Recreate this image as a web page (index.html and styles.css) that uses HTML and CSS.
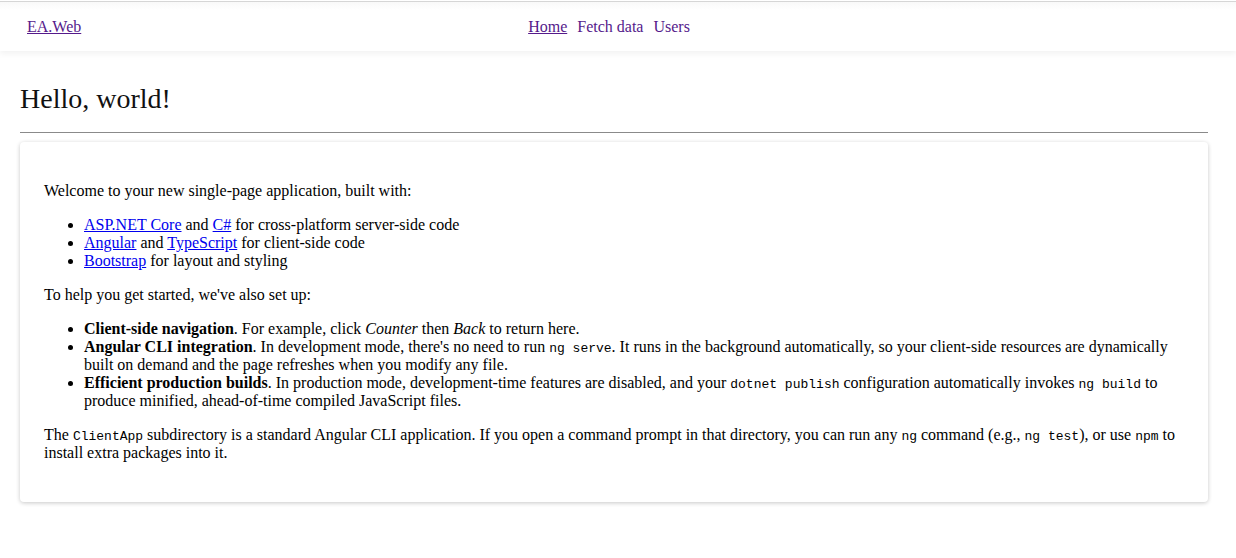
FILE: index.html
```html
<!DOCTYPE html>
<html>
<head>
<meta charset="utf-8">
<title>EA.Web</title>
<link rel="stylesheet" href="styles.css">
</head>
<body>
<header class="topbar">
  <a class="brand" href="#">EA.Web</a>
  <nav class="nav">
    <a class="nav-link active" href="#">Home</a>
    <a class="nav-link" href="#">Fetch data</a>
    <a class="nav-link" href="#">Users</a>
  </nav>
  <span></span>
</header>
<main class="main">
  <h1 class="title">Hello, world!</h1>
  <hr class="rule">
  <section class="card">
    <p>Welcome to your new single-page application, built with:</p>
    <ul>
      <li><a href="#">ASP.NET Core</a> and <a href="#">C#</a> for cross-platform server-side code</li>
      <li><a href="#">Angular</a> and <a href="#">TypeScript</a> for client-side code</li>
      <li><a href="#">Bootstrap</a> for layout and styling</li>
    </ul>
    <p>To help you get started, we've also set up:</p>
    <ul>
      <li><strong>Client-side navigation</strong>. For example, click <em>Counter</em> then <em>Back</em> to return here.</li>
      <li><strong>Angular CLI integration</strong>. In development mode, there's no need to run <code>ng serve</code>. It runs in the background automatically, so your client-side resources are dynamically built on demand and the page refreshes when you modify any file.</li>
      <li><strong>Efficient production builds</strong>. In production mode, development-time features are disabled, and your <code>dotnet publish</code> configuration automatically invokes <code>ng build</code> to produce minified, ahead-of-time compiled JavaScript files.</li>
    </ul>
    <p>The <code>ClientApp</code> subdirectory is a standard Angular CLI application. If you open a command prompt in that directory, you can run any <code>ng</code> command (e.g., <code>ng test</code>), or use <code>npm</code> to install extra packages into it.</p>
  </section>
</main>
</body>
</html>
```
FILE: styles.css
```css
html, body {
  margin: 0;
  padding: 0;
  background: #fff;
}
body {
  font-family: "Liberation Serif", "Times New Roman", serif;
  font-size: 16px;
  color: #000;
  border-top: 1px solid #fff;
}
.topbar {
  border-top: 1px solid #d6d6d6;
  height: 49px;
  display: grid;
  grid-template-columns: 1fr auto 1fr;
  align-items: center;
  padding: 0 45px 0 27px;
  background: linear-gradient(#f9f9f9 0, #fff 8px);
  box-shadow: 0 3px 6px rgba(0, 0, 0, 0.05);
}
.brand {
  color: #551a8b;
  justify-self: start;
}
.nav {
  display: flex;
  gap: 10px;
}
.nav-link {
  color: #551a8b;
  text-decoration: none;
}
.nav-link.active {
  text-decoration: underline;
}
.main {
  padding: 32px 28px 40px 20px;
}
.title {
  font-size: 28px;
  font-weight: normal;
  margin: 0 0 17px 0;
  line-height: 32px;
  color: #111;
}
.rule {
  border: 0;
  border-top: 1px solid #8a8a8a;
  margin: 0 0 9px 0;
}
.card {
  border-radius: 4px;
  box-shadow: 0 1px 4px rgba(0, 0, 0, 0.22);
  padding: 24px;
}
.card p {
  margin: 16px 0;
  line-height: 18px;
}
.card ul {
  margin: 16px 0;
  padding-left: 40px;
  line-height: 18px;
}
.card a {
  color: #0000ee;
}
code {
  font-family: "Liberation Mono", "Courier New", monospace;
  font-size: 13px;
  line-height: 1;
}
```
